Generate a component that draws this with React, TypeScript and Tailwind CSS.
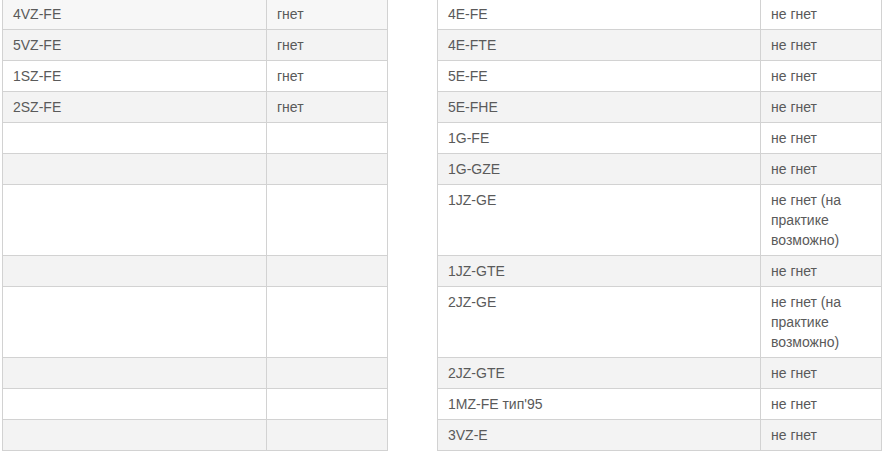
import React from "react";

type Row = { a: string; b: string[]; lines: number };

const rightRows: Row[] = [
  { a: "4E-FE", b: ["не гнет"], lines: 1 },
  { a: "4E-FTE", b: ["не гнет"], lines: 1 },
  { a: "5E-FE", b: ["не гнет"], lines: 1 },
  { a: "5E-FHE", b: ["не гнет"], lines: 1 },
  { a: "1G-FE", b: ["не гнет"], lines: 1 },
  { a: "1G-GZE", b: ["не гнет"], lines: 1 },
  { a: "1JZ-GE", b: ["не гнет (на", "практике", "возможно)"], lines: 3 },
  { a: "1JZ-GTE", b: ["не гнет"], lines: 1 },
  { a: "2JZ-GE", b: ["не гнет (на", "практике", "возможно)"], lines: 3 },
  { a: "2JZ-GTE", b: ["не гнет"], lines: 1 },
  { a: "1MZ-FE тип'95", b: ["не гнет"], lines: 1 },
  { a: "3VZ-E", b: ["не гнет"], lines: 1 },
];

const leftRows: Row[] = [
  { a: "4VZ-FE", b: ["гнет"], lines: 1 },
  { a: "5VZ-FE", b: ["гнет"], lines: 1 },
  { a: "1SZ-FE", b: ["гнет"], lines: 1 },
  { a: "2SZ-FE", b: ["гнет"], lines: 1 },
  { a: "", b: [], lines: 1 },
  { a: "", b: [], lines: 1 },
  { a: "", b: [], lines: 3 },
  { a: "", b: [], lines: 1 },
  { a: "", b: [], lines: 3 },
  { a: "", b: [], lines: 1 },
  { a: "", b: [], lines: 1 },
  { a: "", b: [], lines: 1 },
];

function Table({ rows, w1, first }: { rows: Row[]; w1: string; first: string }) {
  return (
    <div className="flex flex-col border-l border-r border-b border-[#d2d2d2]">
      {rows.map((r, i) => {
        const bg = i === 0 ? first : i % 2 === 1 ? "bg-[#f3f3f3]" : "bg-white";
        const h = r.lines === 3 ? "h-[71px]" : "h-[31px]";
        return (
          <div key={i} className={`flex border-t border-[#d2d2d2] ${bg} ${h}`}>
            <div className={`${w1} shrink-0 border-r border-[#d2d2d2] px-[10px] py-[5px] leading-[20px]`}>
              {r.a}
            </div>
            <div className="w-[120px] shrink-0 px-[10px] py-[5px] leading-[20px]">
              {r.b.map((t, j) => (
                <div key={j}>{t}</div>
              ))}
            </div>
          </div>
        );
      })}
    </div>
  );
}

export default function App() {
  return (
    <div
      className="w-[883px] h-[453px] overflow-hidden bg-white text-[14px] text-[#5a5a5a]"
      style={{ fontFamily: '"Liberation Sans", Arial, sans-serif' }}
    >
      <div className="flex -mt-[2px] pl-[2px] gap-[49px]">
        <div className="w-[386px] shrink-0">
          <Table rows={leftRows} w1="w-[264px]" first="bg-[#f7f7f7]" />
        </div>
        <div className="w-[445px] shrink-0">
          <Table rows={rightRows} w1="w-[323px]" first="bg-white" />
        </div>
      </div>
    </div>
  );
}
